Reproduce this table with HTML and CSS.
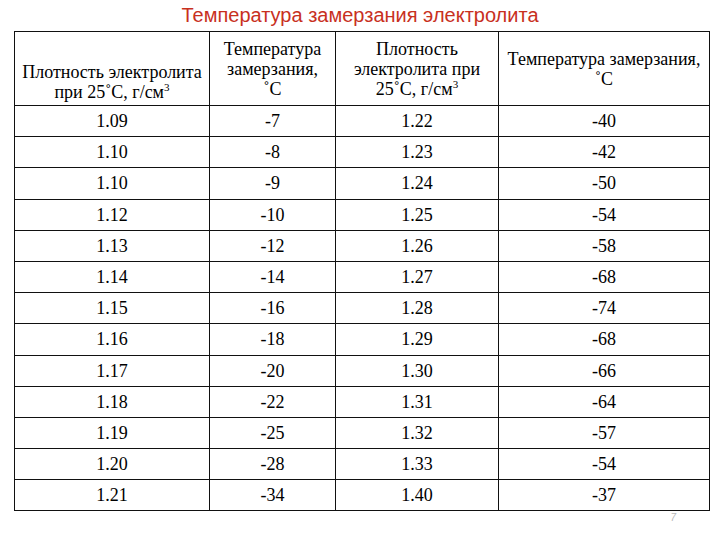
FILE: index.html
```html
<!DOCTYPE html>
<html lang="ru">
<head>
<meta charset="utf-8">
<title>Температура замерзания электролита</title>
<link rel="stylesheet" href="styles.css">
</head>
<body>
<div class="slide">
  <h1 class="title">Температура замерзания электролита</h1>
  <table class="data">
    <colgroup>
      <col class="c1"><col class="c2"><col class="c3"><col class="c4">
    </colgroup>
    <thead>
      <tr>
        <th class="bottom">Плотность электролита<br>при 25˚С, г/см<sup>3</sup></th>
        <th>Температура<br>замерзания,<br>˚С</th>
        <th>Плотность<br>электролита при<br>25˚С, г/см<sup>3</sup></th>
        <th>Температура замерзания,<br>˚С</th>
      </tr>
    </thead>
    <tbody>
      <tr><td>1.09</td><td>-7</td><td>1.22</td><td>-40</td></tr>
      <tr><td>1.10</td><td>-8</td><td>1.23</td><td>-42</td></tr>
      <tr><td>1.10</td><td>-9</td><td>1.24</td><td>-50</td></tr>
      <tr><td>1.12</td><td>-10</td><td>1.25</td><td>-54</td></tr>
      <tr><td>1.13</td><td>-12</td><td>1.26</td><td>-58</td></tr>
      <tr><td>1.14</td><td>-14</td><td>1.27</td><td>-68</td></tr>
      <tr><td>1.15</td><td>-16</td><td>1.28</td><td>-74</td></tr>
      <tr><td>1.16</td><td>-18</td><td>1.29</td><td>-68</td></tr>
      <tr><td>1.17</td><td>-20</td><td>1.30</td><td>-66</td></tr>
      <tr><td>1.18</td><td>-22</td><td>1.31</td><td>-64</td></tr>
      <tr><td>1.19</td><td>-25</td><td>1.32</td><td>-57</td></tr>
      <tr><td>1.20</td><td>-28</td><td>1.33</td><td>-54</td></tr>
      <tr><td>1.21</td><td>-34</td><td>1.40</td><td>-37</td></tr>
    </tbody>
  </table>
  <div class="footer"><span class="pagenum">7</span></div>
</div>
</body>
</html>
```
FILE: styles.css
```css
html, body {
  margin: 0;
  padding: 0;
  background: #ffffff;
}
.slide {
  width: 720px;
  height: 540px;
  display: flex;
  flex-direction: column;
  align-items: stretch;
}
.title {
  margin: 0;
  height: 31px;
  box-sizing: border-box;
  padding-top: 4px;
  text-align: center;
  font-family: "Liberation Sans", Arial, sans-serif;
  font-weight: normal;
  font-size: 20px;
  line-height: 22px;
  color: #c8301e;
}
.data {
  margin-left: 14px;
  width: 695px;
  border-collapse: collapse;
  table-layout: fixed;
  font-family: "Liberation Serif", "Times New Roman", serif;
  color: #000;
}
.c1 { width: 195px; }
.c2 { width: 126px; }
.c3 { width: 163px; }
.c4 { width: 211px; }
.data th, .data td {
  border: 1.5px solid #111;
  text-align: center;
  padding: 0 3px;
}
.data th {
  height: 70px;
  font-weight: normal;
  font-size: 18px;
  line-height: 20px;
  vertical-align: middle;
}
.data th.bottom {
  vertical-align: bottom;
  padding-bottom: 3px;
}
.data sup {
  font-size: 11px;
  line-height: 0;
  vertical-align: 7px;
}
.data td {
  height: 30.2px;
  font-size: 18px;
  line-height: 20px;
  vertical-align: middle;
  padding-top: 0;
  padding-bottom: 0;
}
.footer {
  display: flex;
  justify-content: flex-end;
  padding-right: 44px;
  padding-top: 1px;
}
.pagenum {
  font-family: "Liberation Sans", Arial, sans-serif;
  font-style: italic;
  font-size: 10px;
  line-height: 12px;
  color: #b8b8b8;
}
```
